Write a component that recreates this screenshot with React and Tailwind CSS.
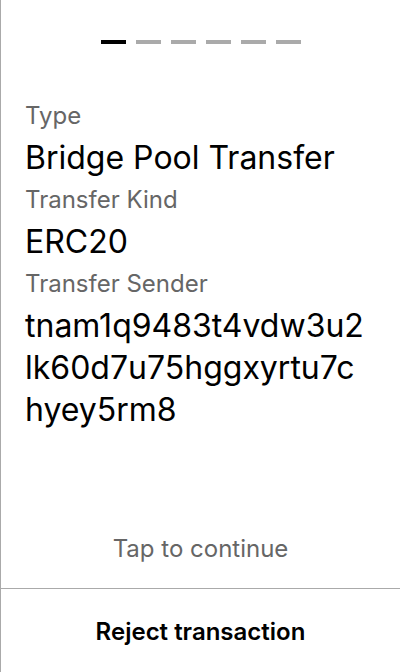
export default function App() {
  const bars = [0, 1, 2, 3, 4, 5];
  return (
    <div className="w-[400px] h-[672px] bg-white border-l border-[#aaaaaa] flex flex-col" style={{ fontFamily: "Inter, 'Noto Sans', sans-serif" }}>
      <div className="flex justify-center gap-[10px] pt-[40px] pl-[1px]">
        {bars.map((i) => (
          <div key={i} className={`w-[25px] h-[4px] ${i === 0 ? "bg-black" : "bg-[#aaaaaa]"}`} />
        ))}
      </div>
      <div className="flex-1 flex flex-col">
        <div className="px-[24px] pt-[51px] flex flex-col">
          <div className="text-[24px] leading-[42px] text-[#666666]">Type</div>
          <div className="text-[32px] leading-[42px] text-black">Bridge Pool Transfer</div>
          <div className="text-[24px] leading-[42px] text-[#666666]">Transfer Kind</div>
          <div className="text-[32px] leading-[42px] text-black">ERC20</div>
          <div className="text-[24px] leading-[42px] text-[#666666]">Transfer Sender</div>
          <div className="text-[32px] leading-[42px] text-black">
            <div>tnam1q9483t4vdw3u2</div>
            <div>lk60d7u75hggxyrtu7c</div>
            <div>hyey5rm8</div>
          </div>
        </div>
        <div className="mt-auto h-[84px] pt-[5px] flex items-center justify-center text-[24px] text-[#666666]">Tap to continue</div>
      </div>
      <div className="h-[84px] pt-[2px] border-t border-[#aaaaaa] flex items-center justify-center text-[24px] font-semibold text-black">Reject transaction</div>
    </div>
  );
}
